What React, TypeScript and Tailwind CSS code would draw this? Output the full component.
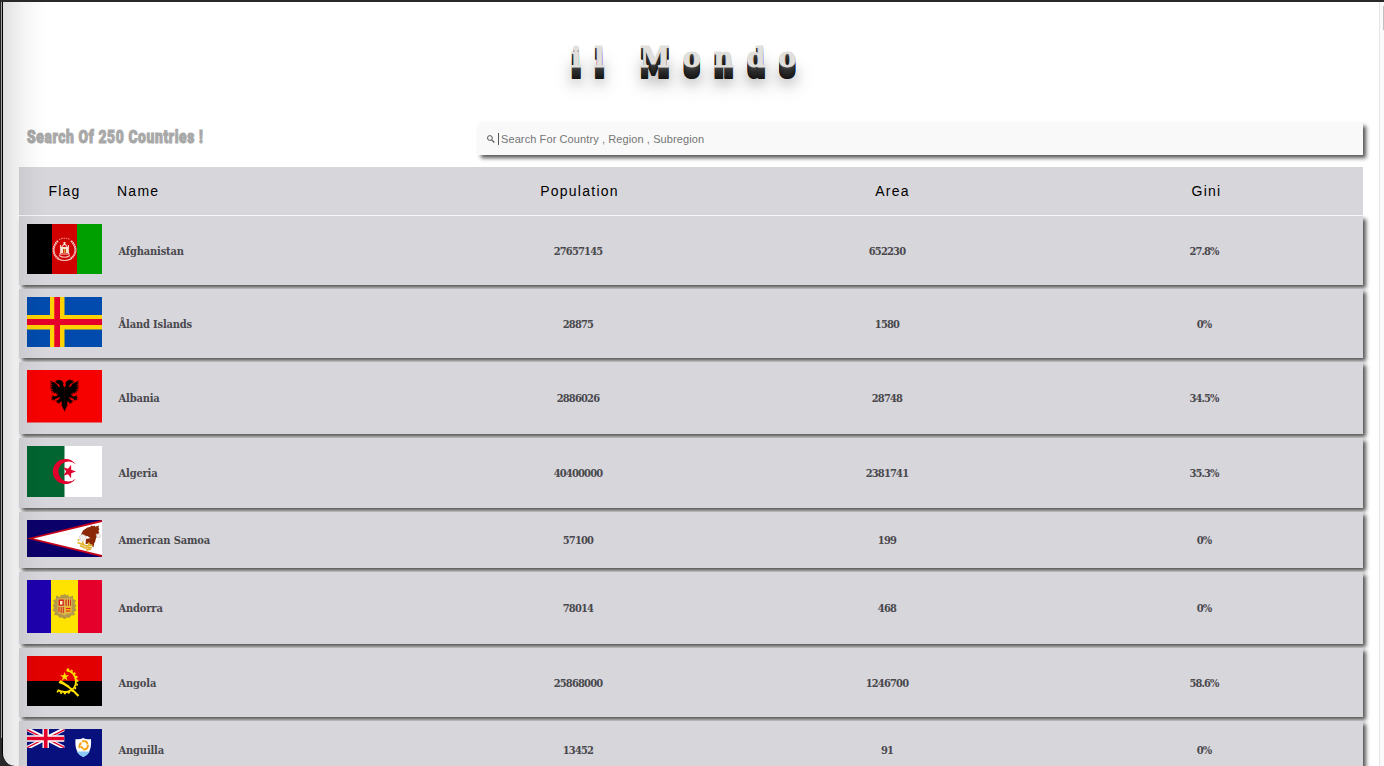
import React from "react";

type Country = {
  name: string;
  population: string;
  area: string;
  gini: string;
  height: string;
  flag: React.ReactNode;
};

function Afghanistan() {
  return (
    <svg width="75" height="50" viewBox="0 0 75 50" className="block">
      <path fill="#000" d="M0 0h25v50H0z" />
      <path fill="#d00000" d="M25 0h25v50H25z" />
      <path fill="#009f00" d="M50 0h25v50H50z" />
      <g fill="none" stroke="#f3c9c4" strokeWidth="1.1">
        <path d="M31 17c-6 5-6 14 1 18M44 17c6 5 6 14-1 18" strokeDasharray="1.6 .5" strokeWidth="2.1" />
        <path d="M31 35q6.500 3 13 0M32 31.500q5.500 3.500 11 0" />
        <path d="M32 15.500q5.500-2.500 11 0" strokeDasharray="1.500 .8" stroke="#e59088" />
        <path d="M33.500 21v9h8v-9M34.500 23.500q3-6 6 0M32 30h11" />
      </g>
      <path fill="#f6e3d2" d="M36.500 18h2v3h-2zM34 23h2v6h-2zM39 23h2v6h-2zM36 23h3v2h-3z" />
      <path fill="#d39a31" d="M36.700 25h1.800v4h-1.800z" />
    </svg>
  );
}

function Aland() {
  return (
    <svg width="75" height="50" viewBox="0 0 75 50" className="block">
      <path fill="#004bad" d="M0 0h75v50H0z" />
      <path fill="#ffd300" d="M23 0h14.500v50H23zM0 18h75v14.500H0z" />
      <path fill="#e4002b" d="M27.300 0h5.700v50h-5.700zM0 22h75v6H0z" />
    </svg>
  );
}

function Albania() {
  const half =
    "M37.500 17.500l-1.500-2 .3-2.500-1.300-2-2.500-1-3 .5-1.300 1.300 1.800-.1-1 1.300 1.700.2 2 1.800.3 2.500-2-1-1.500-2.500-2.500-1.500-3.700-1.500 2.400 2.200-2.400-.4 2.600 2.100-2.800 0 2.900 1.700-2.900.4 3 1.200-2.700.9 3 .5-2.400 1.300 3-.2-1.800 1.700 2.700-.7-1 1.800 2.700-1.200-.3 2 2.200-1-1.700 3-2 .3-2.800-1 1.200 1.500-2 .3 1.800.8-1.600 1.500 2.400-.5 0 1.500 1.700-2.300 2.500-.6 1.600-1 .5 1-1.800 2.200-2.500 1.200 1.900.1-.9 1.700 2-.8.1 1.600 1.800-2.500 1-.1.3 3-.8 1.500 1.300-.2.3 2.300.9 1.300.8 2z";
  return (
    <svg width="75" height="53" viewBox="0 0 75 53" className="block">
      <path fill="#f70000" d="M0 0h75v52.500H0z" />
      <path d={half} stroke="#000" strokeWidth=".35" />
      <path d={half} stroke="#000" strokeWidth=".35" transform="translate(75 0) scale(-1 1)" />
    </svg>
  );
}

function Algeria() {
  return (
    <svg width="75" height="51" viewBox="0 0 75 51" className="block">
      <path fill="#fff" d="M0 0h75v51H0z" />
      <path fill="#006530" d="M0 0h37.500v51H0z" />
      <path fill="#e0002b" d="M49.300 18.500A12.600 12.600 0 1 0 49.300 32.500A10.100 10.100 0 1 1 49.300 18.500z" transform="translate(-.5 0)" />
      <path fill="#e0002b" d="M49 25.500l-4.800 1.700-.1 5-3.100-4-4.700 1.500 2.900-4.200-2.900-4.200 4.700 1.500 3.100-4 .1 5z" />
    </svg>
  );
}

function AmericanSamoa() {
  return (
    <svg width="75" height="37" viewBox="0 0 75 37" className="block">
      <path fill="#0b0069" d="M0 0h75v37H0z" />
      <path fill="#c8001a" d="M0 18.500L75 0v37z" />
      <path fill="#fff" d="M6.500 18.500L75 2v33z" />
      <path fill="#8b2808" d="M54 14.500l2-4 4.500-3 2.500-.5 1.500-1.500 1.500.8 1.700-.8.500 1.200L72 5.500l-.5 2.500.9.800-1 2.200 1 1.500-1.700 2 .3 1.500-2 2-.8 3.500-.7 1.500-1.500-2-1.500-2-4-3-3.500.5z" />
      <path fill="#f2f0ee" stroke="#c4beb8" strokeWidth=".5" d="M52.500 16l3-1.700 3.500 1.700-.5 3-3 2.500-2.500-2zM69 14l4 .2 1 1.500-1 2-3.200-.5z" />
      <path fill="#8b2808" d="M59 19l5-1 3.500 3-1 6.500-4-4-4 .5z" />
      <g fill="none" stroke="#e2b32c" strokeWidth="1.700">
        <path d="M50.500 22.500l4 1.500 5 2 6-1M53 25.500l5 2.500 7-.5M59 30l5-.8M61.500 22.500l1 4M55.500 21.500l1 4M51.500 19v2" />
      </g>
    </svg>
  );
}

function Andorra() {
  return (
    <svg width="75" height="53" viewBox="0 0 75 53" className="block">
      <path fill="#1e00ad" d="M0 0h24.200v53H0z" />
      <path fill="#ffe300" d="M24 0h27v53H24z" />
      <path fill="#e4002b" d="M51 0h24v53H51z" />
      <path fill="#b39848" d="M29 15.500l4 1.500.8-2.300 2.200.5 1.500-1.500 1.500 1.500 2.200-.5.8 2.300 4-1.500 0 3.500 3 1.500-1.500 3 2 2-1.500 2 1.500 3-2.500 1.500 1 3-4 .5-1.500 2.500-2.500-.5-2.500 1.800-2.500-1.800-2.500.5-1.500-2.500-4-.5 1-3-2.500-1.500 1.500-3-1.500-2 2-2-1.500-3 3-1.500z" />
      <path fill="#ddb650" d="M30.500 18.500h14.200v13q0 2-3 2.300-2.500.2-4.200 1.700-1.700-1.500-4-1.700-3-.3-3-2.300z" />
      <path fill="#d5271b" d="M31.500 19.500h5.400v6.300h-5.400zM38.500 19.500h1.200v6.300h-1.200zM41 19.500h1v6.300h-1zM43 19.500h.9v6.300H43zM31.500 27h1v5h-1zM33.700 27h1v6h-1zM35.800 27h1v6h-1z" />
      <path fill="#fff1c5" d="M33 21h2.500v3.500H33z" />
      <path fill="#f4b513" d="M38.500 27h5.500v5h-5.500z" />
      <path fill="none" stroke="#d5271b" strokeWidth="1.100" d="M39 28.500h4.500M39 31h4.500" />
    </svg>
  );
}

function Angola() {
  return (
    <svg width="75" height="50" viewBox="0 0 75 50" className="block">
      <path d="M0 0h75v50H0z" />
      <path fill="#e30000" d="M0 0h75v25H0z" />
      <g fill="none" stroke="#ffe000">
        <path strokeWidth="2" d="M39.500 14.200c11.500 2.100 13 18 2 21.300-4.600 1.500-7.500.5-11-1.300" />
        <path strokeWidth="1.500" strokeDasharray="2.200 1.800" d="M40 13c13 2 14.500 20.200 1.800 23.800-4.600 1.500-8 .5-12-1.300" />
        <path strokeWidth="2.200" d="M32 26C39 28 46 34 51.500 40M33 25l9 6" />
      </g>
      <path fill="#ffe000" d="M37.700 16l1 3.300 3.600-.1-2.900 2 1.200 3.400-2.900-2-2.900 2.200 1.100-3.500-3-2 3.600-.1z" />
    </svg>
  );
}

function Anguilla() {
  return (
    <svg width="75" height="38" viewBox="0 0 75 38" className="block">
      <path fill="#08107e" d="M0 0h75v38H0z" />
      <svg width="37.500" height="19" viewBox="0 0 37.500 19">
        <path stroke="#fff" strokeWidth="4" d="M0 0l37.500 19M37.500 0L0 19" />
        <path stroke="#e4002b" strokeWidth="1.400" d="M0 .7l18 9.100M37.500.7l-18 9.100M18 9.500L0 18.700M19.500 9.500l18 9.200" />
        <path stroke="#fff" strokeWidth="6.400" d="M18.700 0v19M0 9.500h37.500" />
        <path stroke="#e4002b" strokeWidth="3.700" d="M18.700 0v19M0 9.500h37.500" />
      </svg>
      <path fill="#fff" d="M48.500 10q4 .7 7.700-1 3.500 1.700 7.800 1c.5 8-.5 14-7.700 18-7.300-4-8.300-10-7.800-18z" />
      <path fill="#8ccaf6" d="M49.500 22.500h13.400q-2 3.700-6.600 5.500-4.500-1.800-6.800-5.500z" />
      <g fill="none" stroke="#f7a31a" strokeWidth="2">
        <path d="M52.500 19q-.5-4 2-5M55 12.500q5-1.500 5.500 3M61 16q0 4.500-5 4.500M54 17.500l2 2" />
      </g>
    </svg>
  );
}

const countries: Country[] = [
  { name: "Afghanistan", population: "27657145", area: "652230", gini: "27.8%", height: "h-[69px]", flag: <Afghanistan /> },
  { name: "Åland Islands", population: "28875", area: "1580", gini: "0%", height: "h-[69px]", flag: <Aland /> },
  { name: "Albania", population: "2886026", area: "28748", gini: "34.5%", height: "h-[72px]", flag: <Albania /> },
  { name: "Algeria", population: "40400000", area: "2381741", gini: "35.3%", height: "h-[70px]", flag: <Algeria /> },
  { name: "American Samoa", population: "57100", area: "199", gini: "0%", height: "h-[56px]", flag: <AmericanSamoa /> },
  { name: "Andorra", population: "78014", area: "468", gini: "0%", height: "h-[72px]", flag: <Andorra /> },
  { name: "Angola", population: "25868000", area: "1246700", gini: "58.6%", height: "h-[69px]", flag: <Angola /> },
  { name: "Anguilla", population: "13452", area: "91", gini: "0%", height: "h-[57px]", flag: <Anguilla /> },
];

function Row({ c }: { c: Country }) {
  return (
    <div
      className={
        "grid shrink-0 grid-cols-[91px_317px_302px_316px_318px] items-center bg-[#d7d6db] text-center text-[11px] font-bold text-[#49484d] shadow-[3px_3px_4px_#555] " +
        c.height
      }
      style={{ fontFamily: '"DejaVu Serif Condensed", "DejaVu Serif", serif', fontStretch: "condensed" }}
    >
      <div className="self-start pt-2 pl-2">{c.flag}</div>
      <div className="pt-[3px] pl-[8.500px] text-left tracking-[-0.150px]">{c.name}</div>
      <div className="pt-[3px] tracking-[-0.800px]">{c.population}</div>
      <div className="pt-[3px] tracking-[-0.800px]">{c.area}</div>
      <div className="pt-[3px] tracking-[-0.950px]">{c.gini}</div>
    </div>
  );
}

export default function App() {
  return (
    <div className="relative flex h-[766px] w-full overflow-hidden bg-[#29282b] pt-[2px] font-['Liberation_Sans',Arial,sans-serif]">
      <div className="mb-7 w-[2px] shrink-0 rounded-bl-[3px] border-r border-[#a3a3a3] bg-[#252426]" />
      <div className="relative flex min-w-0 flex-1 overflow-hidden rounded-bl-[13px] border-l border-black bg-white">
        <main className="flex min-w-0 flex-1 flex-col pr-4 pl-4">
          <h1
            className="mt-[36px] h-[46px] shrink-0 pl-[552px] text-[27px] leading-[40px] font-bold tracking-[13px] whitespace-nowrap text-[#e0dfdc] [-webkit-text-stroke:0.900px_#e0dfdc] [text-shadow:0_1px_0_#444,0_2px_0_#3c3c3c,0_3px_0_#353535,0_4px_0_#303030,0_5px_0_#2b2b2b,0_6px_0_#282828,0_7px_0_#252525,0_8px_0_#222,0_9px_0_#1f1f1f,0_10px_0_#1c1c1c,0_11px_0_#191919,0_12px_0_#161616,0_16px_12px_rgba(0,0,0,0.28),0_18px_20px_rgba(0,0,0,0.3)]"
            style={{ fontFamily: '"DejaVu Serif", serif' }}
          >
            il Mondo
          </h1>
          <div className="mt-[39px] flex h-8 shrink-0">
            <div className="w-[459px] pt-[1px] pl-2">
              <h2
                className="origin-left scale-x-[0.790] text-[17.500px] leading-[26px] font-black tracking-[0.800px] whitespace-nowrap text-[#a8a8a8] [-webkit-text-stroke:1px_#a8a8a8]"
                style={{ fontFamily: "Roboto, sans-serif" }}
              >
                Search Of 250 Countries !
              </h2>
            </div>
            <div className="flex flex-1 items-center bg-[#f9f9f9] pl-2 text-[11px] text-[#757575] shadow-[3px_3px_4px_#555]">
              <svg width="10" height="10" viewBox="0 0 10 10" fill="none" stroke="#555" className="mr-[2px] -mt-px">
                <circle cx="3.900" cy="4" r="2.400" />
                <path d="M5.700 5.900L8.300 8.500" strokeWidth="1.200" />
              </svg>
              <span className="mr-[2px] h-3 w-px bg-[#555]" />
              <span className="tracking-[0.100px] whitespace-nowrap">Search For Country , Region , Subregion</span>
            </div>
          </div>
          <div className="mt-3 grid h-12 shrink-0 grid-cols-[91px_317px_302px_316px_318px] items-center bg-[#d7d6db] text-center text-[14px] tracking-[1.250px] text-black">
            <div>Flag</div>
            <div className="pl-[7px] text-left">Name</div>
            <div className="pl-[3px]">Population</div>
            <div className="pl-[11px]">Area</div>
            <div className="pl-[5px]">Gini</div>
          </div>
          <div className="mt-px flex flex-col gap-1">
            {countries.map((c) => (
              <Row key={c.name} c={c} />
            ))}
          </div>
        </main>
        <div className="w-[5px] shrink-0 border-l border-[#e6e6e6] bg-[#fafafa] pt-1 pl-[3px]">
          <div className="h-6 w-px bg-[#c0c0c0]" />
        </div>
        <div className="pointer-events-none absolute inset-y-0 left-0 w-[42px] bg-linear-to-r from-black/12 via-black/4 to-transparent" />
      </div>
    </div>
  );
}
